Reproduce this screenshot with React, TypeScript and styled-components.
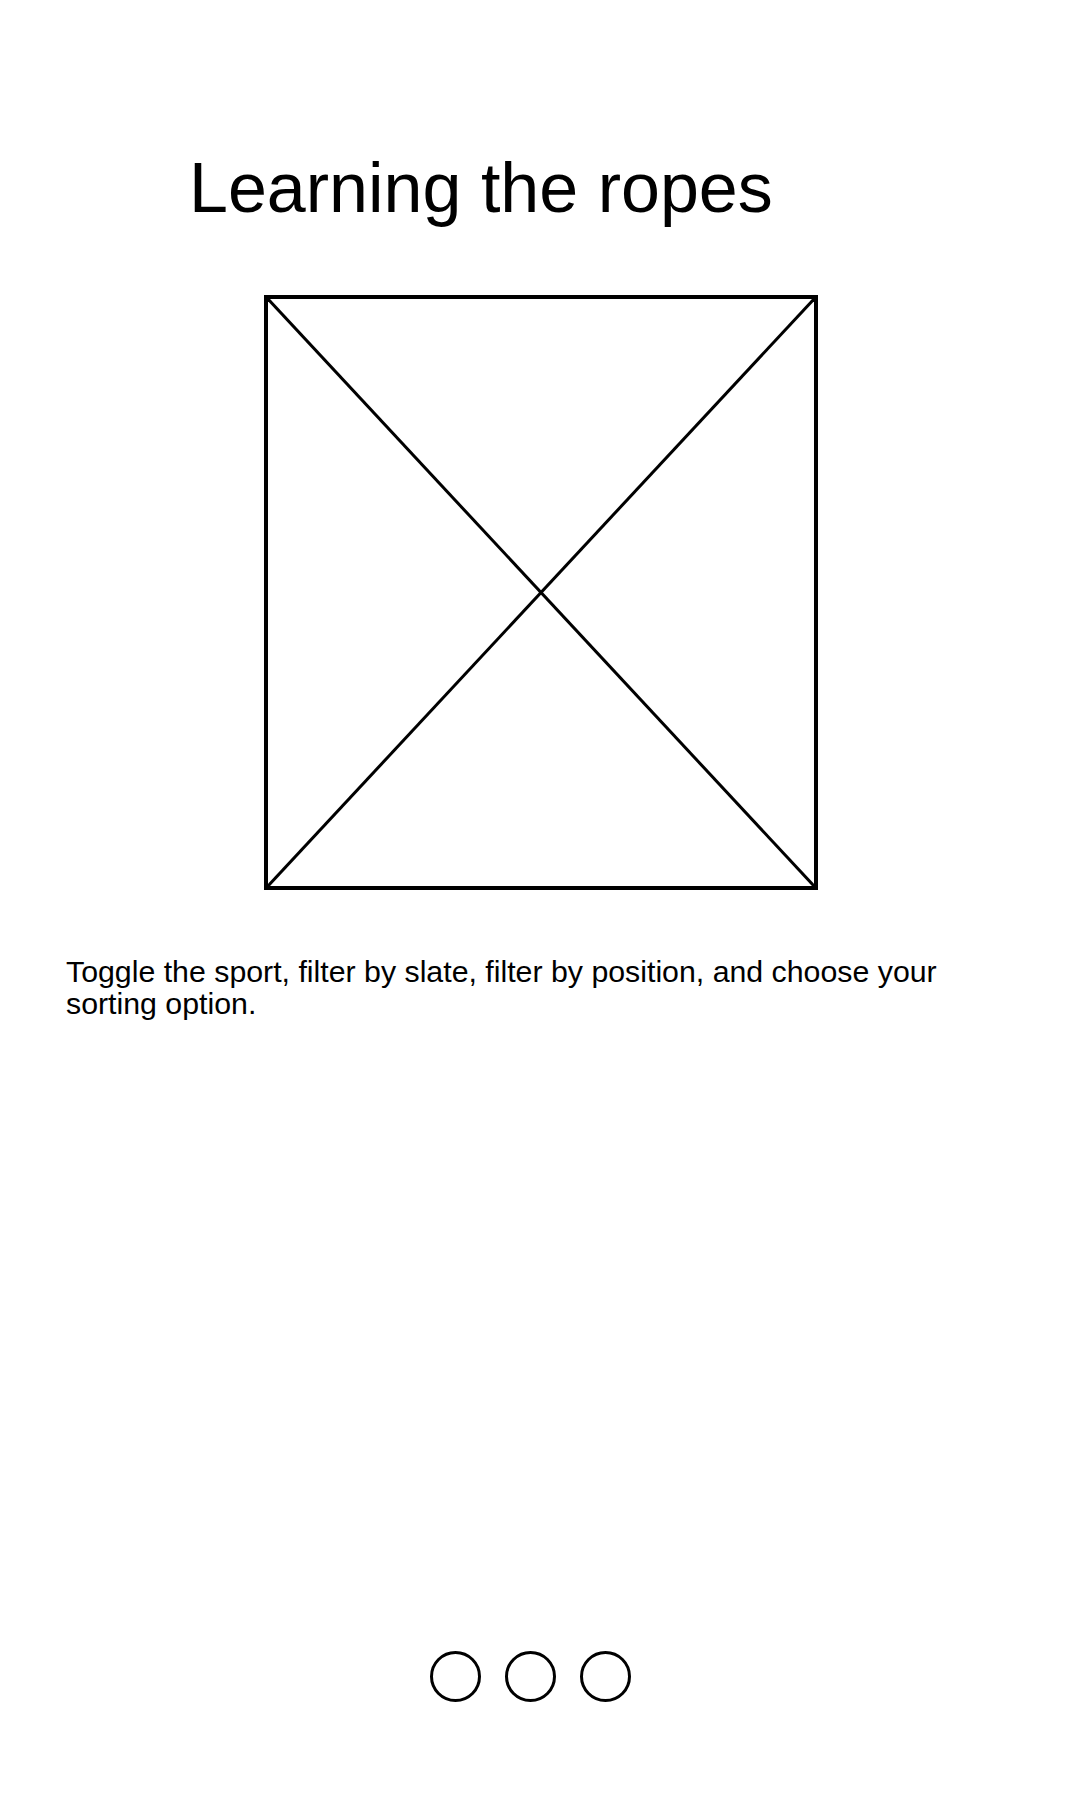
import React from "react";
import styled, { createGlobalStyle } from "styled-components";

const GlobalStyle = createGlobalStyle`
  html, body {
    margin: 0;
    padding: 0;
    background: #ffffff;
  }

  body {
    font-family: "Liberation Sans", Arial, sans-serif;
    color: #000000;
  }
`;

const Screen = styled.div`
  display: flex;
  flex-direction: column;
  min-height: 1800px;
  box-sizing: border-box;
`;

const Title = styled.h1`
  margin: 153px 0 0 189px;
  font-size: 70px;
  line-height: 70px;
  font-weight: 400;
  letter-spacing: 0;
`;

const ImageHolder = styled.div`
  position: relative;
  align-self: center;
  margin: 72px 0 0 2px;
  width: 554px;
  height: 595px;
  border: 4px solid #000;
  box-sizing: border-box;

  svg {
    display: block;
    width: 100%;
    height: 100%;
  }
`;

const Description = styled.p`
  margin: 66px 0 0 66px;
  width: 920px;
  font-size: 30.3px;
  line-height: 32px;
`;

const Dots = styled.div`
  display: flex;
  justify-content: center;
  gap: 24px;
  margin: auto 20px 98px 0;
`;

const Dot = styled.span<{ $active?: boolean }>`
  width: 51px;
  height: 51px;
  border-radius: 50%;
  border: 3px solid #000;
  box-sizing: border-box;
  background: ${(p) => (p.$active ? "#000" : "transparent")};
`;

const Placeholder = () => (
  <ImageHolder>
    <svg viewBox="0 0 546 587" preserveAspectRatio="none">
      <line x1="0" y1="0" x2="546" y2="587" stroke="#000" strokeWidth="3" />
      <line x1="546" y1="0" x2="0" y2="587" stroke="#000" strokeWidth="3" />
    </svg>
  </ImageHolder>
);

export default function App() {
  const steps = [0, 1, 2];

  return (
    <>
      <GlobalStyle />
      <Screen>
        <Title>Learning the ropes</Title>
        <Placeholder />
        <Description>
          Toggle the sport, filter by slate, filter by position, and choose
          your sorting option.
        </Description>
        <Dots>
          {steps.map((s) => (
            <Dot key={s} />
          ))}
        </Dots>
      </Screen>
    </>
  );
}
